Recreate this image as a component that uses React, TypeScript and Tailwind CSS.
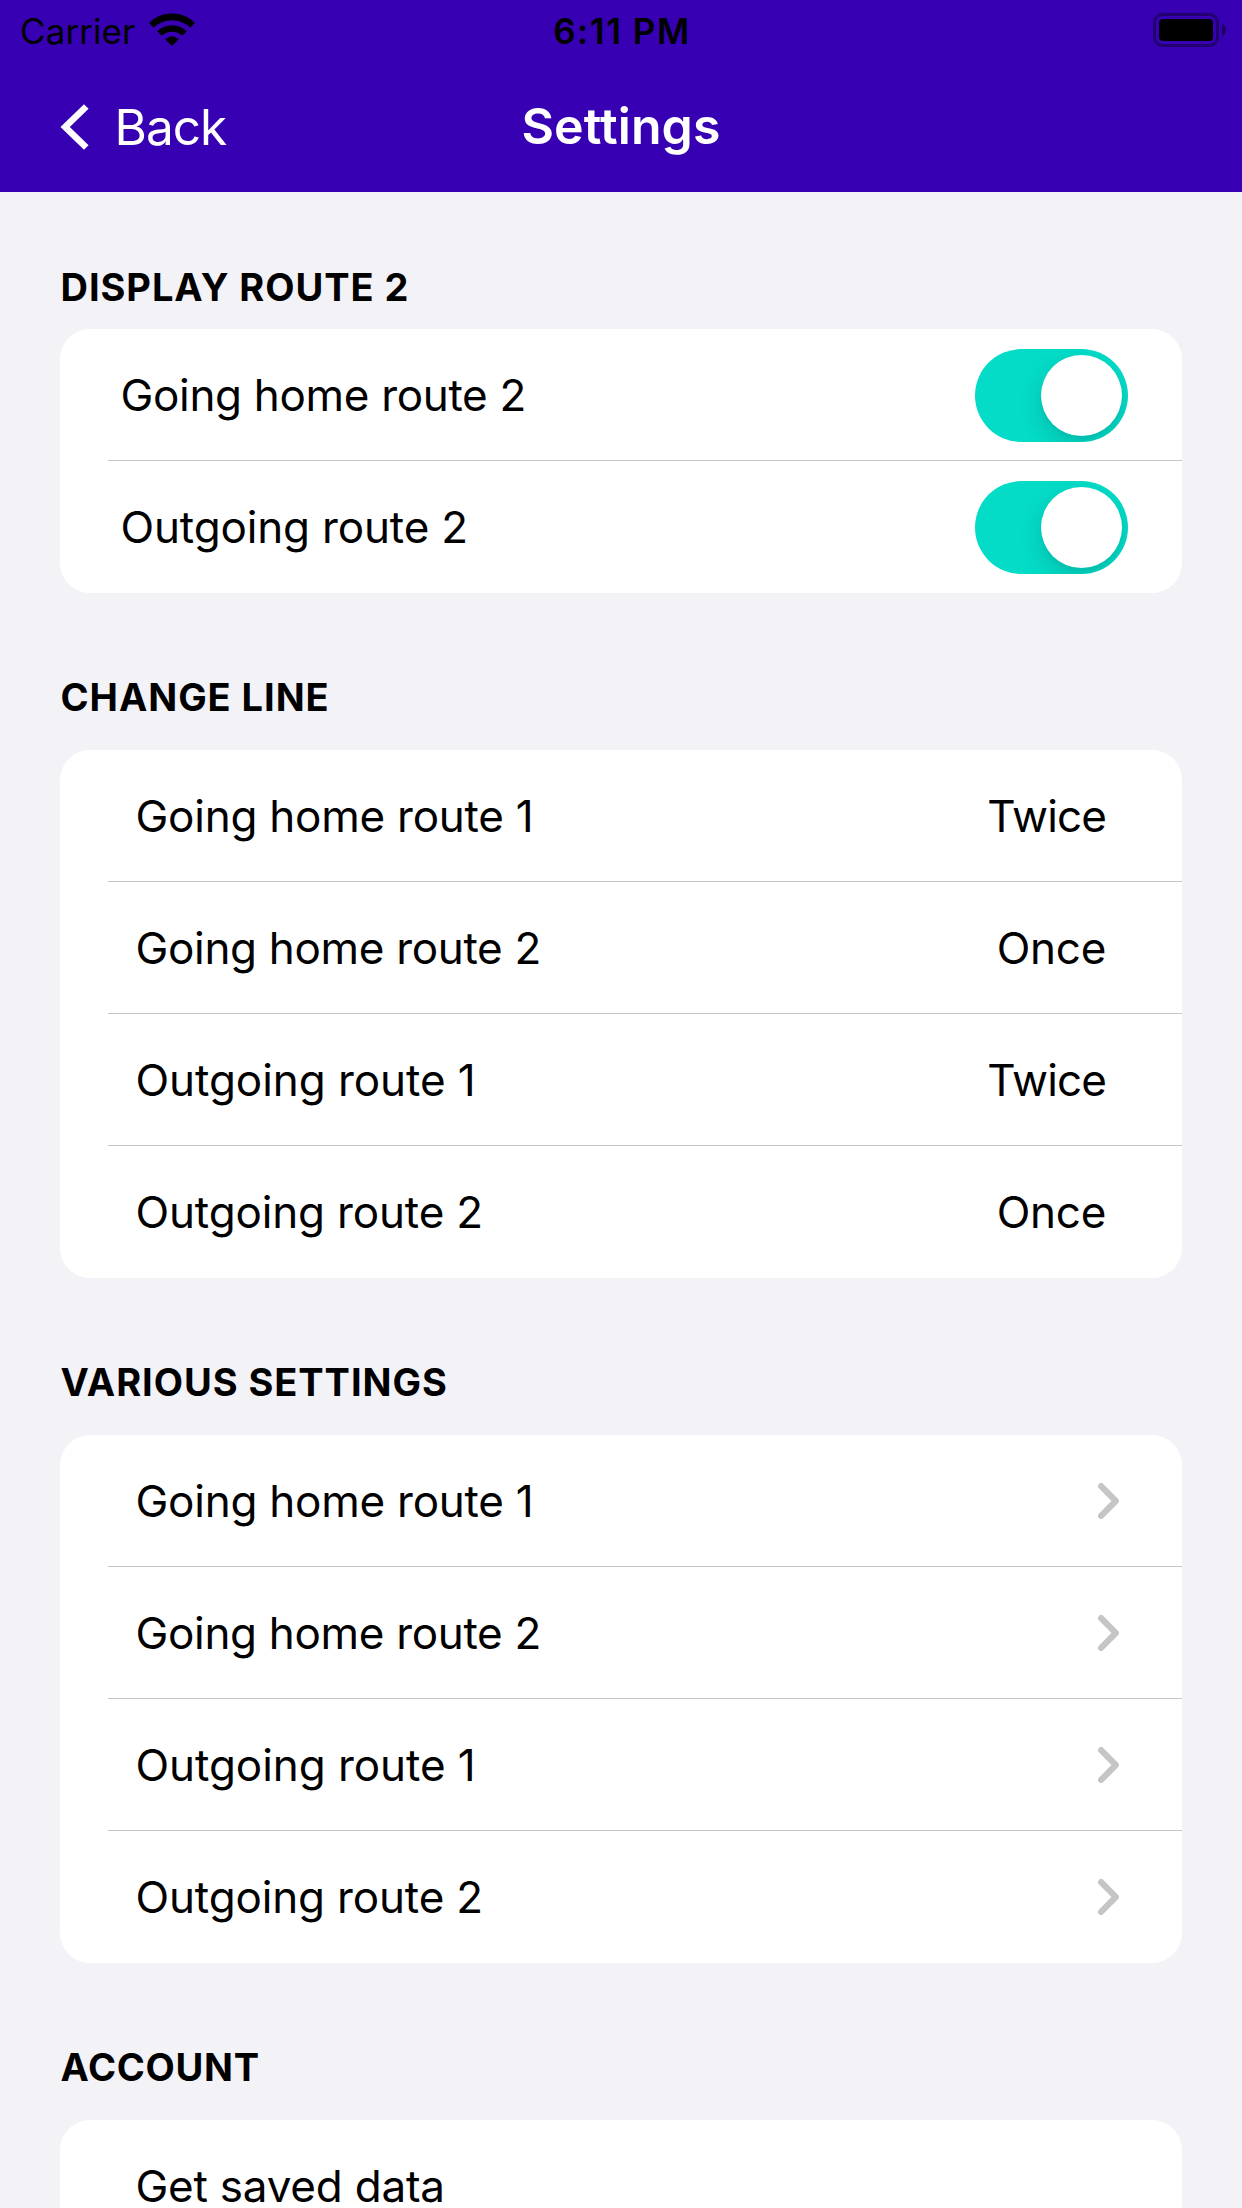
import type { ReactNode } from "react";

function StatusBar() {
  return (
    <div className="grid h-[62px] grid-cols-[1fr_auto_1fr] items-center pr-4 pl-5 text-[35px] leading-[42px] text-black">
      <div className="flex items-center gap-[14px]">
        <span className="tracking-[0.08px]">Carrier</span>
        <svg width="46" height="34" viewBox="0 0 46 34" className="-mt-[3px]" fill="none" stroke="#000">
          <path d="M2.35 12.35a29.2 29.2 0 0 1 41.3 0" strokeWidth="6.8" />
          <path d="M10.55 20.55a17.6 17.6 0 0 1 24.9 0" strokeWidth="6.5" />
          <path d="M23 32.6 16.8 26.4a8.6 8.6 0 0 1 12.4 0Z" fill="#000" strokeWidth="1" strokeLinejoin="round" />
        </svg>
      </div>
      <span className="-ml-[2px] font-[560] tracking-[1.55px]">6:11 PM</span>
      <svg width="73" height="34" viewBox="0 0 73 34" className="-mt-[2px] justify-self-end">
        <rect x="1.5" y="1.5" width="63" height="31" rx="8" fill="none" stroke="#000" strokeOpacity="0.38" strokeWidth="3" />
        <rect x="6" y="6" width="54" height="22" rx="4" fill="#000" />
        <path d="M69 11c5 2.4 5 9.6 0 12Z" fill="#000" fillOpacity="0.5" />
      </svg>
    </div>
  );
}

function NavBar() {
  return (
    <div className="grid h-[130px] grid-cols-[1fr_auto_1fr] items-center px-[60px] text-white">
      <button className="flex items-center gap-[25.5px]">
        <svg width="29" height="46" viewBox="0 0 29 46" fill="none" stroke="#fff" strokeWidth="6.6" className="-mt-px">
          <path d="M26.3 2.5 5.2 23l21.1 20.5" />
        </svg>
        <span className="text-[49.5px] leading-[60px] tracking-[-0.98px]">Back</span>
      </button>
      <h1 className="-mt-[3px] text-[50px] leading-[60px] font-semibold tracking-[0.1px]">Settings</h1>
    </div>
  );
}

function Section({ title, first, children }: { title: string; first?: boolean; children: ReactNode }) {
  return (
    <section className={first ? "mt-[71px]" : "mt-20"}>
      <h2 className={`pl-[0.5px] text-[38px] leading-[48px] font-[650] ${title === "ACCOUNT" ? "tracking-[0.7px]" : "tracking-[0.95px]"}`}>{title}</h2>
      <div className={`${first ? "mt-[18px]" : "mt-[29px]"} overflow-hidden rounded-[30px] bg-white`}>{children}</div>
    </section>
  );
}

const labelTracking: Record<string, string> = {
  "Going home route 1": "tracking-[-0.24px]",
  "Going home route 2": "tracking-[-0.32px]",
  "Outgoing route 1": "tracking-[-0.06px]",
  "Outgoing route 2": "tracking-[-0.16px]",
  "Get saved data": "tracking-[-0.22px]",
};

function Row({ label, inset, last, children }: { label: string; inset: string; last?: boolean; children?: ReactNode }) {
  return (
    <div className="h-[132px] pl-12">
      <div className={`flex h-full items-center justify-between border-b pt-px ${inset} ${last ? "border-white" : "border-[#c6c6c8]"}`}>
        <span className={`text-[44px] leading-[54px] whitespace-nowrap ${labelTracking[label]}`}>{label}</span>
        {children}
      </div>
    </div>
  );
}

function Toggle() {
  return (
    <button role="switch" aria-checked="true" className="mt-px flex h-[93px] w-[153px] items-center justify-end overflow-hidden rounded-full bg-[#04dcc8] pr-1.5">
      <span className="size-[81px] rounded-full bg-white shadow-[0_9px_24px_rgba(0,0,0,0.15),0_3px_3px_rgba(0,0,0,0.04)]" />
    </button>
  );
}

function Chevron() {
  return (
    <svg width="21" height="36" viewBox="0 0 21 36" fill="none" stroke="#c5c5c7" strokeWidth="6.2" strokeLinecap="round" strokeLinejoin="round">
      <path d="M3.1 3.1 17.8 18 3.1 32.9" />
    </svg>
  );
}

const toggles = ["Going home route 2", "Outgoing route 2"];
const routes = ["Going home route 1", "Going home route 2", "Outgoing route 1", "Outgoing route 2"];
const changes = ["Twice", "Once", "Twice", "Once"];

export default function App() {
  return (
    <div className="h-[2208px] w-[1242px] overflow-hidden bg-[#f2f2f7] font-['Inter',sans-serif] text-black">
      <header className="bg-[#3700b3]">
        <StatusBar />
        <NavBar />
      </header>
      <main className="px-[60px]">
        <Section title="DISPLAY ROUTE 2" first>
          {toggles.map((label, i) => (
            <Row key={label} label={label} inset="pl-[12.5px] pr-[54px]" last={i === toggles.length - 1}>
              <Toggle />
            </Row>
          ))}
        </Section>
        <Section title="CHANGE LINE">
          {routes.map((label, i) => (
            <Row key={label} label={label} inset="pl-[27.5px] pr-[76px]" last={i === routes.length - 1}>
              <span className={`text-[44px] leading-[54px] ${changes[i] === "Twice" ? "tracking-[-0.86px]" : "tracking-[-0.3px]"}`}>{changes[i]}</span>
            </Row>
          ))}
        </Section>
        <Section title="VARIOUS SETTINGS">
          {routes.map((label, i) => (
            <Row key={label} label={label} inset="pl-[27.5px] pr-[63px]" last={i === routes.length - 1}>
              <Chevron />
            </Row>
          ))}
        </Section>
        <Section title="ACCOUNT">
          <Row label="Get saved data" inset="pl-[27.5px]" />
        </Section>
      </main>
    </div>
  );
}
